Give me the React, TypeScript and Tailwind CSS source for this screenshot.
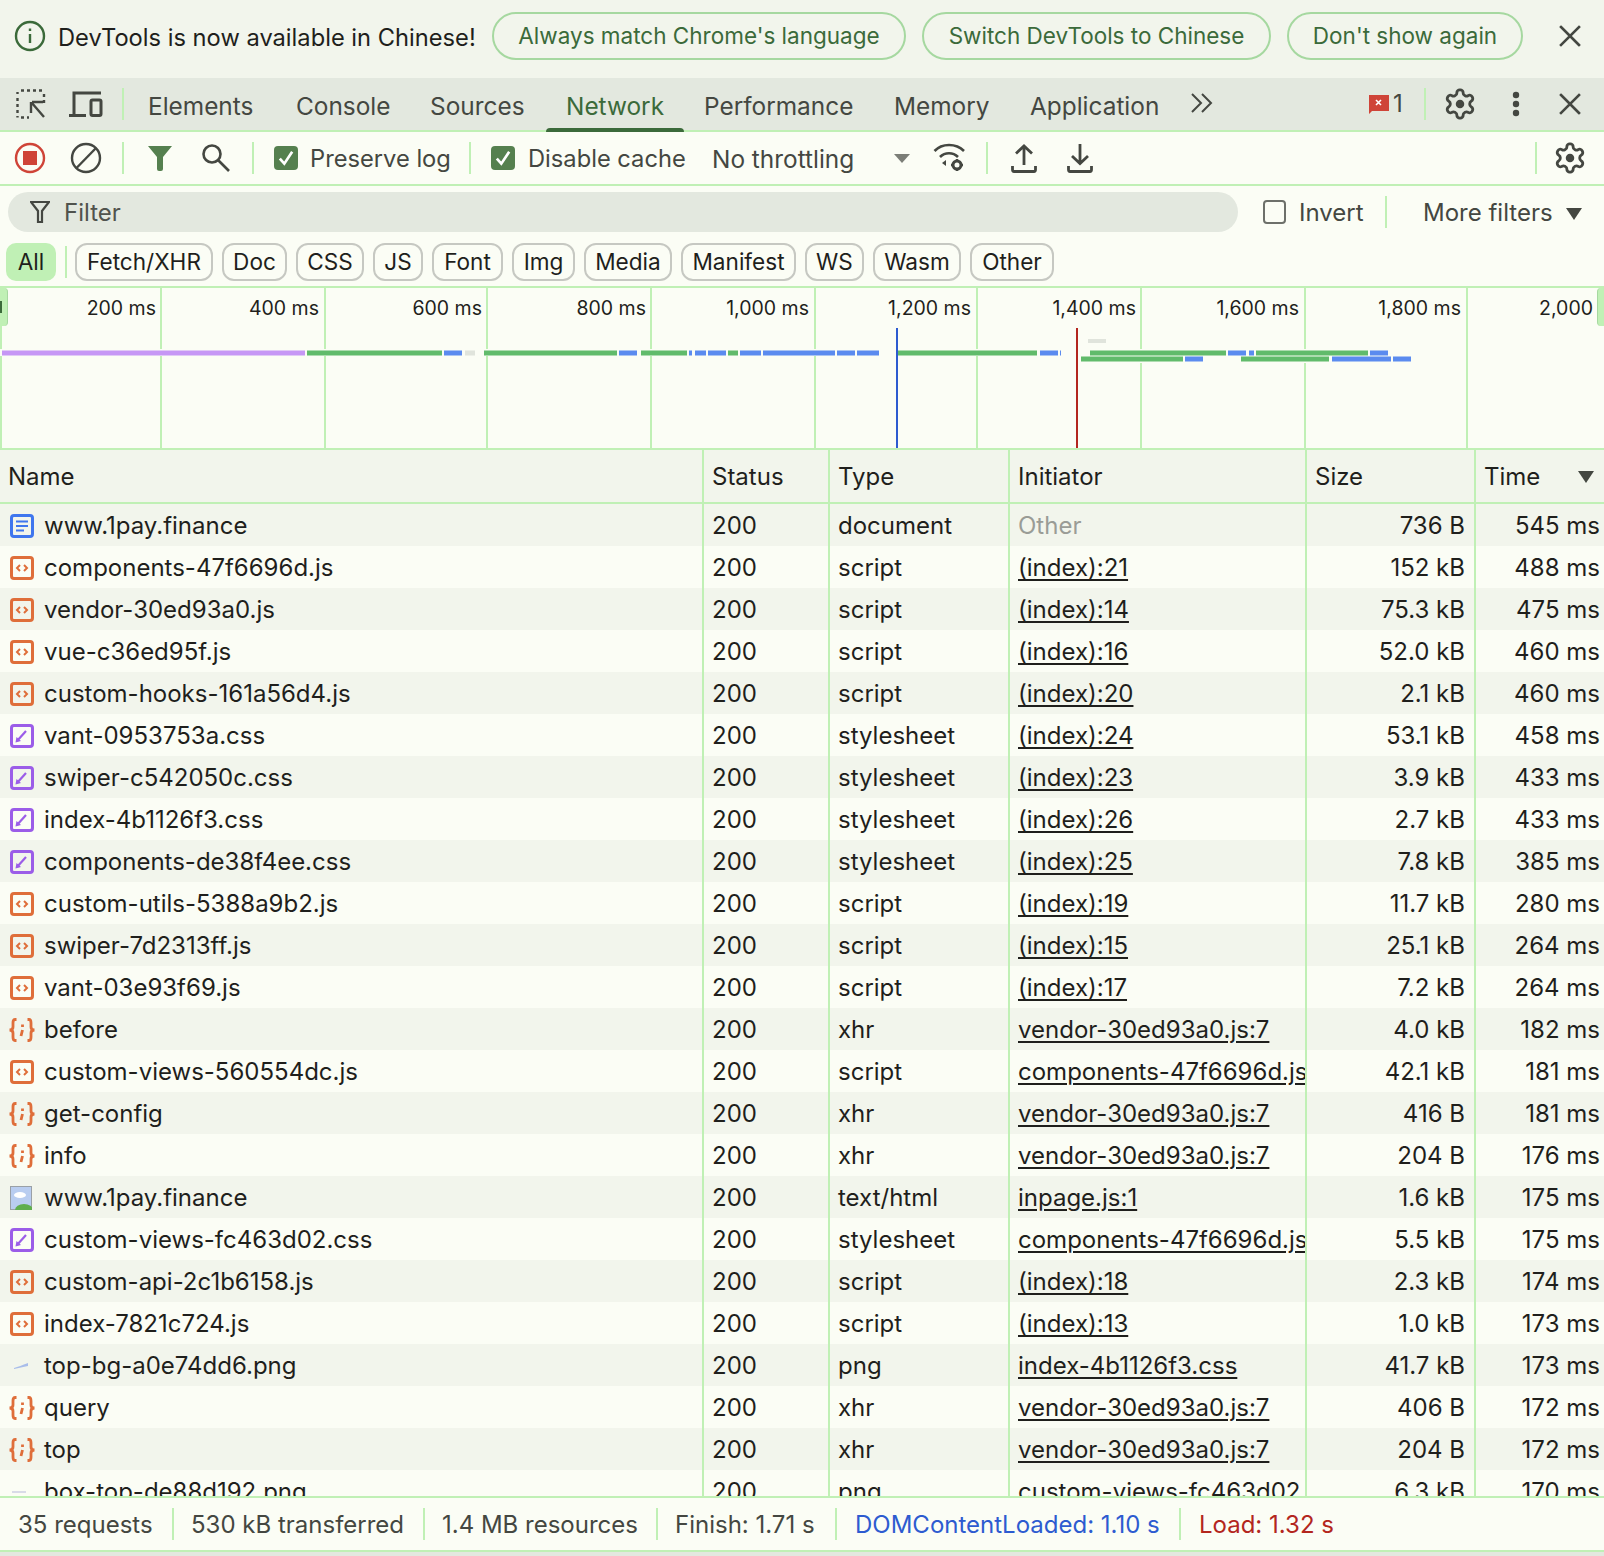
import React from 'react';

type Kind = 'doc' | 'js' | 'css' | 'xhr' | 'img' | 'faint' | 'faint2';
type Req = { name: string; kind: Kind; type: string; init: string; size: string; time: string };

const gearPath =
  'M12.22 2h-.44a2 2 0 0 0-2 2v.18a2 2 0 0 1-1 1.73l-.43.25a2 2 0 0 1-2 0l-.15-.08a2 2 0 0 0-2.73.73l-.22.38a2 2 0 0 0 .73 2.73l.15.1a2 2 0 0 1 1 1.72v.51a2 2 0 0 1-1 1.74l-.15.09a2 2 0 0 0-.73 2.73l.22.38a2 2 0 0 0 2.73.73l.15-.08a2 2 0 0 1 2 0l.43.25a2 2 0 0 1 1 1.73V20a2 2 0 0 0 2 2h.44a2 2 0 0 0 2-2v-.18a2 2 0 0 1 1-1.73l.43-.25a2 2 0 0 1 2 0l.15.08a2 2 0 0 0 2.73-.73l.22-.39a2 2 0 0 0-.73-2.73l-.15-.08a2 2 0 0 1-1-1.74v-.5a2 2 0 0 1 1-1.74l.15-.09a2 2 0 0 0 .73-2.73l-.22-.38a2 2 0 0 0-2.73-.73l-.15.08a2 2 0 0 1-2 0l-.43-.25a2 2 0 0 1-1-1.73V4a2 2 0 0 0-2-2z';

const requests: Req[] = [
  { name: 'www.1pay.finance', kind: 'doc', type: 'document', init: 'Other', size: '736 B', time: '545 ms' },
  { name: 'components-47f6696d.js', kind: 'js', type: 'script', init: '(index):21', size: '152 kB', time: '488 ms' },
  { name: 'vendor-30ed93a0.js', kind: 'js', type: 'script', init: '(index):14', size: '75.3 kB', time: '475 ms' },
  { name: 'vue-c36ed95f.js', kind: 'js', type: 'script', init: '(index):16', size: '52.0 kB', time: '460 ms' },
  { name: 'custom-hooks-161a56d4.js', kind: 'js', type: 'script', init: '(index):20', size: '2.1 kB', time: '460 ms' },
  { name: 'vant-0953753a.css', kind: 'css', type: 'stylesheet', init: '(index):24', size: '53.1 kB', time: '458 ms' },
  { name: 'swiper-c542050c.css', kind: 'css', type: 'stylesheet', init: '(index):23', size: '3.9 kB', time: '433 ms' },
  { name: 'index-4b1126f3.css', kind: 'css', type: 'stylesheet', init: '(index):26', size: '2.7 kB', time: '433 ms' },
  { name: 'components-de38f4ee.css', kind: 'css', type: 'stylesheet', init: '(index):25', size: '7.8 kB', time: '385 ms' },
  { name: 'custom-utils-5388a9b2.js', kind: 'js', type: 'script', init: '(index):19', size: '11.7 kB', time: '280 ms' },
  { name: 'swiper-7d2313ff.js', kind: 'js', type: 'script', init: '(index):15', size: '25.1 kB', time: '264 ms' },
  { name: 'vant-03e93f69.js', kind: 'js', type: 'script', init: '(index):17', size: '7.2 kB', time: '264 ms' },
  { name: 'before', kind: 'xhr', type: 'xhr', init: 'vendor-30ed93a0.js:7', size: '4.0 kB', time: '182 ms' },
  { name: 'custom-views-560554dc.js', kind: 'js', type: 'script', init: 'components-47f6696d.js', size: '42.1 kB', time: '181 ms' },
  { name: 'get-config', kind: 'xhr', type: 'xhr', init: 'vendor-30ed93a0.js:7', size: '416 B', time: '181 ms' },
  { name: 'info', kind: 'xhr', type: 'xhr', init: 'vendor-30ed93a0.js:7', size: '204 B', time: '176 ms' },
  { name: 'www.1pay.finance', kind: 'img', type: 'text/html', init: 'inpage.js:1', size: '1.6 kB', time: '175 ms' },
  { name: 'custom-views-fc463d02.css', kind: 'css', type: 'stylesheet', init: 'components-47f6696d.js', size: '5.5 kB', time: '175 ms' },
  { name: 'custom-api-2c1b6158.js', kind: 'js', type: 'script', init: '(index):18', size: '2.3 kB', time: '174 ms' },
  { name: 'index-7821c724.js', kind: 'js', type: 'script', init: '(index):13', size: '1.0 kB', time: '173 ms' },
  { name: 'top-bg-a0e74dd6.png', kind: 'faint', type: 'png', init: 'index-4b1126f3.css', size: '41.7 kB', time: '173 ms' },
  { name: 'query', kind: 'xhr', type: 'xhr', init: 'vendor-30ed93a0.js:7', size: '406 B', time: '172 ms' },
  { name: 'top', kind: 'xhr', type: 'xhr', init: 'vendor-30ed93a0.js:7', size: '204 B', time: '172 ms' },
  { name: 'box-top-de88d192.png', kind: 'faint2', type: 'png', init: 'custom-views-fc463d02', size: '6.3 kB', time: '170 ms' },
];

const chips = [
  ['Fetch/XHR', 'w-[138px]'],
  ['Doc', 'w-[65px]'],
  ['CSS', 'w-[68px]'],
  ['JS', 'w-[50px]'],
  ['Font', 'w-[71px]'],
  ['Img', 'w-[63px]'],
  ['Media', 'w-[88px]'],
  ['Manifest', 'w-[115px]'],
  ['WS', 'w-[59px]'],
  ['Wasm', 'w-[88px]'],
  ['Other', 'w-[84px]'],
];

const gridLines = [161, 325, 487, 651, 815, 977, 1141, 1305, 1467];
const ticks = [
  { label: '200 ms', right: 156 },
  { label: '400 ms', right: 319 },
  { label: '600 ms', right: 482 },
  { label: '800 ms', right: 646 },
  { label: '1,000 ms', right: 809 },
  { label: '1,200 ms', right: 971 },
  { label: '1,400 ms', right: 1136 },
  { label: '1,600 ms', right: 1299 },
  { label: '1,800 ms', right: 1461 },
  { label: '2,000', right: 1593 },
];

const G = '#61bb6b';
const B = '#5b8bef';
// x0, x1, colour for each row of the waterfall
const bars1: [number, number, string][] = [
  [2, 305, '#c697f5'], [307, 442, G], [444, 462, B], [465, 475, '#e0e4dc'],
  [484, 617, G], [619, 637, B], [641, 687, G], [689, 692, B], [695, 706, B], [708, 726, B],
  [728, 738, G], [740, 761, B], [763, 835, B], [837, 855, B], [857, 879, B],
  [897, 1037, G], [1040, 1058, B], [1060, 1061, B],
  [1090, 1226, G], [1228, 1246, B], [1249, 1254, B], [1256, 1368, G], [1370, 1388, B],
];
const bars2: [number, number, string][] = [
  [1081, 1183, G], [1185, 1203, B], [1241, 1329, G], [1332, 1391, B], [1393, 1411, B],
];

function Sep({ className = '' }: { className?: string }) {
  return <div className={`w-[2px] h-[32px] shrink-0 bg-[#c0f0b5] ${className}`} />;
}

function Gear() {
  return (
    <svg width="34" height="36" viewBox="0 0 24 24" fill="none" stroke="#444741" strokeWidth="2">
      <path d={gearPath} />
      <circle cx="12" cy="12" r="3" fill="#444741" stroke="none" />
    </svg>
  );
}

function Close() {
  return (
    <svg width="22" height="22" viewBox="0 0 22 22" stroke="#444741" strokeWidth="2.6" strokeLinecap="square">
      <path d="M2 2 20 20M20 2 2 20" />
    </svg>
  );
}

function Check() {
  return (
    <div className="w-[24px] h-[24px] rounded-[4px] bg-[#55804f] flex items-center justify-center shrink-0">
      <svg width="18" height="18" viewBox="0 0 16 16" fill="none" stroke="#ffffff" strokeWidth="2.4">
        <path d="M2.5 8.5 6.5 13 13.5 2.5" />
      </svg>
    </div>
  );
}

function FileIcon({ kind }: { kind: Kind }) {
  if (kind === 'doc') {
    return (
      <svg width="24" height="24" viewBox="0 0 24 24" fill="none">
        <rect x="1.500" y="1.500" width="21" height="21" rx="2.500" stroke="#3f76ee" strokeWidth="3" />
        <path d="M6 7.500h12M6 12h12M6 16.500h8" stroke="#3f76ee" strokeWidth="2" />
      </svg>
    );
  }
  if (kind === 'js') {
    return (
      <svg width="24" height="24" viewBox="0 0 24 24" fill="none">
        <rect x="1.500" y="1.500" width="21" height="21" rx="2.500" stroke="#df6e3a" strokeWidth="3" />
        <path d="M10 9 7 12l3 3M14 9l3 3-3 3" stroke="#df6e3a" strokeWidth="2" />
      </svg>
    );
  }
  if (kind === 'css') {
    return (
      <svg width="24" height="24" viewBox="0 0 24 24" fill="none">
        <rect x="1.500" y="1.500" width="21" height="21" rx="2.500" stroke="#9b5de8" strokeWidth="3" />
        <path d="M7 17l9-10" stroke="#9b5de8" strokeWidth="2.200" />
        <path d="M5.500 18.500l1-5.500 4.500 4z" fill="#9b5de8" />
      </svg>
    );
  }
  if (kind === 'xhr') {
    return (
      <svg width="28" height="24" viewBox="0 0 28 24" fill="none" stroke="#df6e3a" strokeWidth="2.800" className="-ml-[2px]">
        <path d="M8.500 1.500H7C5 1.500 5 3.500 5 5v4c0 2-1 3-3.500 3C4 12 5 13 5 15v4c0 1.500 0 3.500 2 3.500h1.500" />
        <path d="M19.500 1.500H21c2 0 2 2 2 3.500v4c0 2 1 3 3.500 3-2.500 0-3.500 1-3.500 3v4c0 1.500 0 3.500-2 3.500h-1.500" />
        <path d="M14.500 6.500v2.500M14.500 12l-1.500 6" />
      </svg>
    );
  }
  if (kind === 'img') {
    return (
      <svg width="22" height="24" viewBox="0 0 22 24">
        <rect x="0.500" y="0.500" width="21" height="23" fill="#b9cdf0" stroke="#9aa0a6" />
        <ellipse cx="10" cy="9" rx="6" ry="3" fill="#ffffff" />
        <ellipse cx="14" cy="24" rx="9" ry="6" fill="#5fae4e" />
      </svg>
    );
  }
  if (kind === 'faint') {
    return (
      <svg width="22" height="10" viewBox="0 0 22 10">
        <path d="M4 7c4-1 8-3 14-5v3c-5 1-9 2-14 3z" fill="#a9bdea" />
      </svg>
    );
  }
  return (
    <svg width="22" height="6" viewBox="0 0 22 6">
      <rect x="2" y="2" width="14" height="2" fill="#d9dbe8" />
    </svg>
  );
}

const columns = 'grid grid-cols-[704px_126px_180px_297px_169px_128px]';
const cell = 'pl-[8px] pt-[2px] border-r-2 border-[#c0f0b5] overflow-hidden whitespace-nowrap flex items-center';

function Row({ req, idx }: { req: Req; idx: number }) {
  const other = req.init === 'Other';
  return (
    <div className={`${columns} h-[42px] text-[#1f1f1c] ${idx % 2 === 0 ? 'bg-[#f2f5ec]' : 'bg-[#fbfdf5]'}`}>
      <div className={cell}>
        <div className="w-[36px] pl-[2px] shrink-0 flex items-center">
          <FileIcon kind={req.kind} />
        </div>
        {req.name}
      </div>
      <div className={cell}>200</div>
      <div className={cell}>{req.type}</div>
      <div className={cell}>
        {other ? <span className="text-[#9a9c96]">Other</span> : <span className="underline underline-offset-[3px]">{req.init}</span>}
      </div>
      <div className={`${cell} justify-end pr-[9px]`}>{req.size}</div>
      <div className="pr-[4px] pt-[2px] flex items-center justify-end whitespace-nowrap">{req.time}</div>
    </div>
  );
}

export default function App() {
  return (
    <div className="w-[1604px] h-[1556px] overflow-hidden flex flex-col bg-[#e3e8df] text-[24px] leading-none text-[#1f1f1c] font-['Inter','Liberation_Sans',sans-serif]">
      {/* language infobar */}
      <div className="h-[78px] shrink-0 bg-[#f2f5ec] flex items-center pl-[14px] pb-[6px]">
        <svg width="32" height="32" viewBox="0 0 32 32" fill="none" stroke="#3b6a3a" strokeWidth="2.4" className="shrink-0">
          <circle cx="16" cy="16" r="14" />
          <path d="M16 14v9M16 8.500v2.600" />
        </svg>
        <span className="ml-[12px] pt-[4px] w-[434px] whitespace-nowrap text-[23.7px]">DevTools is now available in Chinese!</span>
        <div className="flex gap-[16px] text-[#3b6a3a] text-[22.5px]">
          <button className="w-[414px] h-[48px] rounded-full border-2 border-[#a6d8a0] whitespace-nowrap">Always match Chrome's language</button>
          <button className="w-[349px] h-[48px] rounded-full border-2 border-[#a6d8a0] whitespace-nowrap">Switch DevTools to Chinese</button>
          <button className="w-[236px] h-[48px] rounded-full border-2 border-[#a6d8a0] whitespace-nowrap">Don't show again</button>
        </div>
        <div className="ml-[36px]"><Close /></div>
      </div>

      {/* panel tabs */}
      <div className="h-[54px] shrink-0 bg-[#e3e8df] border-b-2 border-[#c0f0b5] flex items-center text-[#444741] relative">
        <div className="w-[60px] flex justify-center pl-[1px] shrink-0">
          <svg width="30" height="30" viewBox="0 0 30 30" fill="none" stroke="#444741" strokeWidth="2.4">
            <path d="M1.500 5V3M5 1.500h3M11 1.500h3M17 1.500h3M23 1.500h3M28 5v3M28 11v3M1.500 9v3M1.500 15v3M1.500 21v3M1.500 27v1.500M5 28.500h3M11 28.500h2" />
            <path d="M16 13h11M15 13v11M15.500 13.500 28 28" />
          </svg>
        </div>
        <div className="w-[52px] flex justify-center shrink-0">
          <svg width="34" height="26" viewBox="0 0 34 26" fill="none" stroke="#444741" strokeWidth="3">
            <path d="M5 24.500V2h27" />
            <path d="M0 24.500h17" />
            <rect x="22" y="9" width="10" height="15.500" rx="1.500" />
          </svg>
        </div>
        <Sep className="ml-[10px]" />
        <div className="ml-[4px] flex h-full text-[24.4px]">
          {[
            ['Elements', 'w-[148px]'],
            ['Console', 'w-[134px]'],
            ['Sources', 'w-[136px]'],
            ['Network', 'w-[138px]'],
            ['Performance', 'w-[190px]'],
            ['Memory', 'w-[136px]'],
            ['Application', 'w-[180px]'],
          ].map(([t, w]) => (
            <div key={t} className={`${w} h-full relative flex items-center pl-[20px] pt-[5px] whitespace-nowrap ${t === 'Network' ? 'text-[#3b6a3a]' : ''}`}>
              {t}
              {t === 'Network' && <div className="absolute left-0 right-0 -bottom-[2px] h-[4px] rounded-t-[4px] bg-[#3b6a3a]" />}
            </div>
          ))}
        </div>
        <svg width="24" height="20" viewBox="0 0 24 20" fill="none" stroke="#444741" strokeWidth="2" className="-mt-[2px] shrink-0">
          <path d="M2 1l9 9-9 9M12 1l9 9-9 9" />
        </svg>
        <div className="ml-auto flex items-center">
          <svg width="22" height="22" viewBox="0 0 22 22" className="shrink-0">
            <path d="M1 2h20v16H4l-3 3z" fill="#cf4438" />
            <path d="M8 7l5 5M13 7l-5 5" stroke="#ffffff" strokeWidth="1.600" />
          </svg>
          <span className="ml-[3px] w-[12px] mr-[19px]">1</span>
          <Sep />
          <div className="ml-[17px]"><Gear /></div>
          <svg width="8" height="26" viewBox="0 0 8 26" fill="#444741" className="ml-[35px]">
            <circle cx="4" cy="4" r="3.200" />
            <circle cx="4" cy="13" r="3.200" />
            <circle cx="4" cy="22" r="3.200" />
          </svg>
          <div className="ml-[39px] mr-[23px]"><Close /></div>
        </div>
      </div>

      {/* network toolbar */}
      <div className="h-[54px] shrink-0 bg-[#fbfdf5] border-b-2 border-[#c0f0b5] flex items-center text-[#444741] text-[23.7px]">
        <svg width="32" height="32" viewBox="0 0 32 32" className="ml-[14px] shrink-0">
          <circle cx="16" cy="16" r="14" fill="none" stroke="#cf4438" strokeWidth="2.400" />
          <rect x="9" y="9" width="14" height="14" fill="#cf4438" />
        </svg>
        <svg width="32" height="32" viewBox="0 0 32 32" fill="none" stroke="#444741" strokeWidth="2.400" className="ml-[24px] shrink-0">
          <circle cx="16" cy="16" r="14" />
          <path d="M6.500 26 26 6" />
        </svg>
        <Sep className="ml-[20px]" />
        <svg width="26" height="26" viewBox="0 0 26 26" className="ml-[23px] shrink-0" fill="#55804f">
          <path d="M1 1h24L16 12v12a2 2 0 0 1-2 2h-2a2 2 0 0 1-2-2V12z" />
        </svg>
        <svg width="30" height="30" viewBox="0 0 30 30" fill="none" stroke="#444741" strokeWidth="2.600" className="ml-[28px] shrink-0">
          <circle cx="11" cy="11" r="8.500" />
          <path d="M17 17l11 11" />
        </svg>
        <Sep className="ml-[21px]" />
        <div className="ml-[20px]"><Check /></div>
        <span className="ml-[12px] pt-[2px] w-[159px] whitespace-nowrap">Preserve log</span>
        <Sep />
        <div className="ml-[20px]"><Check /></div>
        <span className="ml-[13px] pt-[2px] w-[184px] whitespace-nowrap">Disable cache</span>
        <span className="w-[182px] pt-[2px] whitespace-nowrap text-[24.4px]">No throttling</span>
        <div className="w-0 h-0 border-x-[8px] border-x-transparent border-t-[9px] border-t-[#444741] shrink-0 opacity-70" />
        <svg width="34" height="32" viewBox="0 0 34 32" fill="none" stroke="#444741" strokeWidth="2.600" className="ml-[23px] shrink-0">
          <path d="M1.500 9C9 1 23 1 31 9M7 15c5-5 13-5 18 0" />
          <path d="M13 18l-4 3 4 3z" fill="#444741" stroke="none" />
          <circle cx="24" cy="23" r="4" strokeWidth="3" />
          <path d="M24 17v2M24 27v2M18 23h2M28 23h2" strokeWidth="2.400" />
        </svg>
        <Sep className="ml-[19px]" />
        <svg width="26" height="30" viewBox="0 0 26 30" fill="none" stroke="#444741" strokeWidth="2.800" className="ml-[23px] shrink-0">
          <path d="M13 22V3M5 10.500 13 3l8 7.500" />
          <path d="M1.500 23v3.500c0 1 .5 2 1.500 2h20c1 0 1.500-1 1.500-2V23" />
        </svg>
        <svg width="26" height="30" viewBox="0 0 26 30" fill="none" stroke="#444741" strokeWidth="2.800" className="ml-[30px] shrink-0">
          <path d="M13 1v19M5 13l8 7.500 8-7.500" />
          <path d="M1.500 23v3.500c0 1 .5 2 1.500 2h20c1 0 1.500-1 1.500-2V23" />
        </svg>
        <Sep className="ml-auto" />
        <div className="ml-[16px] mr-[17px]"><Gear /></div>
      </div>

      {/* filter row */}
      <div className="h-[57px] shrink-0 bg-[#fbfdf5] flex items-start pt-[6px] text-[#444741]">
        <div className="ml-[8px] w-[1230px] h-[40px] rounded-full bg-[#e3e8df] flex items-center pl-[22px]">
          <svg width="20" height="22" viewBox="0 0 20 22" fill="none" stroke="#444741" strokeWidth="2.200" className="shrink-0">
            <path d="M1 1h18l-7 9v11H8V10z" />
          </svg>
          <span className="ml-[14px] pt-[2px] text-[#50534d]">Filter</span>
        </div>
        <div className="ml-[25px] h-[40px] flex items-center">
          <div className="w-[23px] h-[24px] rounded-[4px] border-2 border-[#6d706a] bg-[#fbfdf5] shrink-0" />
          <span className="ml-[13px] pt-[2px] w-[86px] whitespace-nowrap">Invert</span>
          <Sep />
          <span className="ml-[36px] pt-[2px] whitespace-nowrap">More filters</span>
          <div className="ml-[13px] mt-[4px] w-0 h-0 border-x-[8px] border-x-transparent border-t-[12px] border-t-[#444741]" />
        </div>
      </div>

      {/* resource type chips */}
      <div className="h-[45px] shrink-0 bg-[#fbfdf5] border-b-2 border-[#c0f0b5] flex items-start pl-[6px] text-[22.6px]">
        <div className="w-[50px] h-[38px] rounded-[10px] bg-[#c0f0b5] flex items-center justify-center">All</div>
        <Sep className="ml-[9px] mt-[3px] mr-[8px]" />
        <div className="flex gap-[9px]">
          {chips.map(([c, w]) => (
            <div key={c} className={`${w} h-[38px] rounded-[12px] border-2 border-[#c6c8c2] bg-[#fbfdf5] flex items-center justify-center whitespace-nowrap`}>
              {c}
            </div>
          ))}
        </div>
      </div>

      {/* overview timeline */}
      <div className="h-[162px] shrink-0 bg-[#fbfdf5] relative overflow-hidden border-b-2 border-[#c0f0b5]">
        <svg width="1604" height="160" viewBox="0 288 1604 160" className="absolute inset-0">
          <rect x="0" y="288" width="2" height="160" fill="#c0f0b5" />
          {gridLines.map(x => (
            <rect key={x} x={x - 1} y="288" width="2" height="160" fill="#c0f0b5" />
          ))}
          <rect x="0" y="349" width="1394" height="7" fill="#fbfdf5" />
          <rect x="1079" y="356" width="336" height="7" fill="#fbfdf5" />
          <rect x="1088" y="339" width="18" height="4" fill="#e0e4dc" />
          {bars1.map(([a, b, c]) => (
            <rect key={`a${a}`} x={a} y="350.500" width={b - a} height="5" fill={c} />
          ))}
          {bars2.map(([a, b, c]) => (
            <rect key={`b${a}`} x={a} y="356.500" width={b - a} height="5" fill={c} />
          ))}
          <rect x="896" y="328" width="2" height="120" fill="#2d5bd0" />
          <rect x="1076" y="328" width="2" height="120" fill="#b3261e" />
        </svg>
        {ticks.map(t => (
          <span key={t.label} className="absolute top-[10px] text-[19.5px] text-[#1f1f1c] whitespace-nowrap leading-[20px]" style={{ right: 1604 - t.right }}>
            {t.label}
          </span>
        ))}
        <div className="absolute left-0 top-[0px] w-[8px] h-[38px] rounded-r-[4px] bg-[#c0f0b5] border-r border-[#a6d8a0]">
          <div className="w-[2px] h-[12px] mt-[13px] bg-[#3b6a3a]" />
        </div>
        <div className="absolute right-0 top-[0px] w-[7px] h-[38px] rounded-l-[4px] bg-[#c0f0b5] border-l border-[#a6d8a0]" />
      </div>

      {/* request table */}
      <div className={`${columns} h-[54px] shrink-0 bg-[#f2f5ec] border-b-2 border-[#c0f0b5]`}>
        <div className={cell}>Name</div>
        <div className={cell}>Status</div>
        <div className={cell}>Type</div>
        <div className={cell}>Initiator</div>
        <div className={`${cell} pl-[7px]`}>Size</div>
        <div className="pl-[8px] pt-[2px] flex items-center relative">
          Time
          <div className="absolute right-[10px] top-[21px] w-0 h-0 border-x-[8px] border-x-transparent border-t-[12px] border-t-[#444741]" />
        </div>
      </div>
      <div className="h-[992px] shrink-0 overflow-hidden bg-[#fbfdf5]">
        {requests.map((r, i) => (
          <Row key={r.name + i} req={r} idx={i} />
        ))}
      </div>

      {/* summary bar */}
      <div className="h-[56px] shrink-0 bg-[#fbfdf5] border-y-2 border-[#c0f0b5] flex items-center text-[#444741] whitespace-nowrap">
        <span className="w-[172px] pl-[18px] pt-[2px]">35 requests</span>
        <Sep />
        <span className="w-[249px] pl-[17px] pt-[2px]">530 kB transferred</span>
        <Sep />
        <span className="w-[231px] pl-[17px] pt-[2px]">1.4 MB resources</span>
        <Sep />
        <span className="w-[177px] pl-[17px] pt-[2px]">Finish: 1.71 s</span>
        <Sep />
        <span className="w-[342px] pl-[18px] pt-[2px] text-[#2d5bd0]">DOMContentLoaded: 1.10 s</span>
        <Sep />
        <span className="pl-[18px] pt-[2px] text-[#b3261e]">Load: 1.32 s</span>
      </div>
    </div>
  );
}
